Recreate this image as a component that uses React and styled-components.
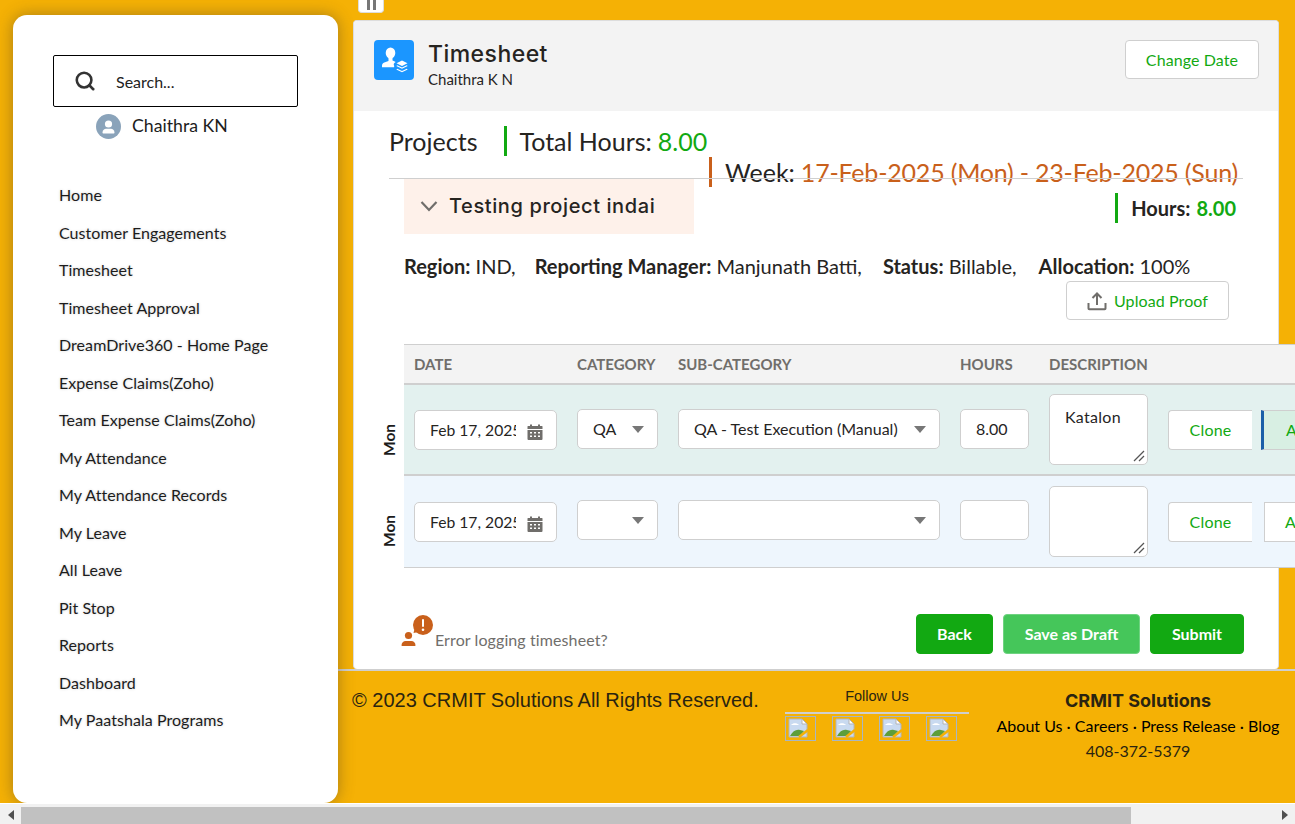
import React from "react"
import styled, { createGlobalStyle } from "styled-components"
import { Search } from "lucide-react"

const GREEN = "#12a912"
const ORANGE = "#c9601b"
const GRAY = "#706e6b"
const LINE = "#cfcfcf"
const INK = "#26241f"

const Global = createGlobalStyle`
  html, body { margin: 0; padding: 0; height: 100%; overflow: hidden; }
  body { font-family: Lato, "Liberation Sans", sans-serif; color: ${INK}; background: #f5b105; }
  * { box-sizing: border-box; }
`

const Page = styled.div`
  height: 824px;
  display: flex;
  flex-direction: column;
`

const Viewport = styled.div`
  height: 803px;
  display: flex;
  overflow: hidden;
  background: #f5b105;
`

const Sidebar = styled.aside`
  flex: 0 0 325px;
  height: 788px;
  margin: 15px 0 0 13px;
  padding: 40px 40px 0;
  background: #fff;
  border-radius: 14px;
  box-shadow: 0 0 16px rgba(70, 60, 40, 0.45);
  position: relative;
  z-index: 1;
`

const SearchBox = styled.div`
  height: 52px;
  width: 245px;
  display: flex;
  align-items: center;
  padding-left: 20px;
  gap: 20px;
  border: 1px solid #000;
  border-radius: 2px;
  font-size: 16px;
  color: #222;
`

const UserRow = styled.div`
  display: flex;
  align-items: center;
  gap: 11px;
  margin: 7px 0 0 43px;
  font-size: 17.7px;
  color: #1c1c1c;
`

const UserName = styled.span`
  margin-bottom: 2px;
`

const Menu = styled.nav`
  margin: 37px 0 0 6px;
  display: flex;
  flex-direction: column;
`

const MenuItem = styled.a`
  height: 37.5px;
  line-height: 37.5px;
  font-size: 16px;
  letter-spacing: 0.06px;
  color: #1c1c1c;
  text-shadow: 0 0 3px rgba(0, 0, 0, 0.18);
`

const Content = styled.div`
  flex: 1;
  min-width: 0;
  display: flex;
  flex-direction: column;
`

const PauseTab = styled.div`
  width: 26px;
  height: 13px;
  margin-left: 20px;
  display: flex;
  justify-content: center;
  gap: 3px;
  background: #fff;
  border: 1px solid #ddd;
  border-top: 0;
  border-radius: 0 0 4px 4px;
`

const PauseBar = styled.span`
  width: 3px;
  height: 10px;
  background: #777;
`

const Card = styled.main`
  width: 926px;
  height: 649px;
  margin: 7px 0 0 15px;
  background: #fff;
  border: 1px solid #ddd;
  border-bottom: 0;
  border-radius: 4px;
`

const CardHeader = styled.header`
  height: 90px;
  display: flex;
  align-items: flex-start;
  padding: 19px 19px 0 20px;
  background: #f3f3f3;
  border-radius: 4px 4px 0 0;
`

const AppIcon = styled.div`
  width: 40px;
  height: 40px;
  border-radius: 4px;
  background: #1b96ff;
  display: flex;
  align-items: center;
  justify-content: center;
`

const Titles = styled.div`
  margin-left: 14px;
  flex: 1;
`

const Title = styled.div`
  font-family: Inter, "Noto Sans", sans-serif;
  font-size: 23px;
  font-weight: 500;
  line-height: 28px;
  letter-spacing: 0.45px;
`

const SubTitle = styled.div`
  margin-top: 2px;
  font-size: 15px;
  line-height: 18px;
`

const OutlineButton = styled.button`
  height: 39px;
  width: ${(p) => p.$w}px;
  display: flex;
  align-items: center;
  justify-content: center;
  gap: 7px;
  font: 400 16px Lato, sans-serif;
  letter-spacing: 0.1px;
  color: ${GREEN};
  background: #fff;
  border: 1px solid ${LINE};
  border-radius: 4px;
  padding: 0;
`

const Body = styled.div`
  padding-left: 35px;
`

const SummaryRow = styled.div`
  display: flex;
  align-items: center;
  height: 30px;
  margin-top: 15px;
  font-size: 25px;
`

const BarText = styled.div`
  display: flex;
  align-items: center;
  height: 30px;
  padding-left: ${(p) => p.$pad || 13}px;
  border-left: 3px solid ${(p) => p.$color};
  margin-left: ${(p) => p.$ml || 0}px;
  white-space: nowrap;
`

const Value = styled.span`
  color: ${(p) => p.$color};
  margin-left: 6px;
  letter-spacing: ${(p) => p.$track || 0}px;
`

const WeekRow = styled.div`
  display: flex;
  margin: 1px 0 0 320px;
  font-size: 25px;
`

const Divider = styled.div`
  position: relative;
  width: 854px;
  height: 1px;
  margin-top: -9px;
  background: ${LINE};
`

const AccordionRow = styled.div`
  display: flex;
  justify-content: space-between;
  width: 832px;
  margin-left: 15px;
`

const Accordion = styled.div`
  width: 290px;
  height: 55px;
  padding: 0 0 2px 16px;
  display: flex;
  align-items: center;
  gap: 11px;
  background: #fef1ea;
  font-family: Inter, "Noto Sans", sans-serif;
  font-size: 20px;
  font-weight: 500;
  letter-spacing: 0.6px;
`

const HoursBox = styled.div`
  margin-top: 14px;
  font-size: 20px;
  font-weight: 700;
`

const MetaLine = styled.div`
  display: flex;
  height: 30px;
  line-height: 30px;
  margin: 17px 0 0 15px;
  font-size: 20px;
  white-space: nowrap;
  b { font-weight: 700; }
`

const MetaItem = styled.span`
  margin-left: ${(p) => p.$ml || 0}px;
`

const UploadRow = styled.div`
  display: flex;
  justify-content: flex-end;
  width: 840px;
`

const Table = styled.div`
  margin: 24px 0 0 -9px;
  width: 1020px;
`

const HeadRow = styled.div`
  display: flex;
  gap: 20px;
  height: 41px;
  margin-left: 24px;
  padding-left: 10px;
  align-items: center;
  background: #f3f3f3;
  border-top: 1px solid ${LINE};
  border-bottom: 2px solid ${LINE};
  font-size: 15px;
  font-weight: 700;
  color: ${GRAY};
`

const HeadCell = styled.div`
  width: ${(p) => p.$w}px;
  white-space: nowrap;
`

const Row = styled.div`
  display: flex;
  height: ${(p) => p.$h}px;
`

const DayCell = styled.div`
  flex: 0 0 24px;
  min-width: 0;
  padding: 18px 6px 0 0;
  display: flex;
  align-items: center;
  justify-content: center;
`

const DayLabel = styled.span`
  transform: rotate(-90deg);
  font-size: 15.5px;
  font-weight: 700;
  color: #1c1c1c;
`

const Band = styled.div`
  flex: 1;
  display: flex;
  align-items: center;
  gap: 20px;
  padding-left: 10px;
  background: ${(p) => p.$bg};
  border-bottom: ${(p) => p.$edge}px solid ${LINE};
`

const Field = styled.div`
  position: relative;
  flex: 0 0 ${(p) => p.$w}px;
  height: ${(p) => p.$h || 40}px;
  display: flex;
  align-items: ${(p) => (p.$top ? "flex-start" : "center")};
  margin-top: ${(p) => p.$mt || 0}px;
  padding: ${(p) => (p.$top ? "12px 0 0 15px" : "0 0 2px 15px")};
  background: #fff;
  border: 1px solid ${LINE};
  border-radius: 5px;
  font-size: 16px;
  letter-spacing: ${(p) => (p.$top ? 0.3 : 0)}px;
  white-space: nowrap;
`

const DateClip = styled.span`
  width: 86px;
  margin-top: 2px;
  overflow: hidden;
  font-size: 15.7px;
`

const Caret = styled.span`
  position: absolute;
  right: 13px;
  top: 16px;
  width: 0;
  height: 0;
  border-left: 6.5px solid transparent;
  border-right: 6.5px solid transparent;
  border-top: 7px solid #777;
`

const TrailingIcon = styled.span`
  position: absolute;
  right: 13px;
  top: 13px;
  display: flex;
`

const Grip = styled.span`
  position: absolute;
  right: 2px;
  bottom: 2px;
  display: flex;
`

const CloneButton = styled.div`
  flex: 0 0 84px;
  height: 40px;
  margin-top: 1px;
  margin-right: ${(p) => p.$mr}px;
  padding-bottom: 2px;
  display: flex;
  align-items: center;
  justify-content: center;
  background: #fff;
  border: 1px solid ${LINE};
  border-right: 0;
  border-radius: 4px 0 0 4px;
  font-size: 16px;
  letter-spacing: 0.2px;
  color: ${GREEN};
`

const AddButton = styled.div`
  flex: 0 0 100px;
  height: 40px;
  margin-top: 1px;
  padding: 0 0 2px ${(p) => (p.$active ? 22 : 20)}px;
  display: flex;
  align-items: center;
  background: ${(p) => (p.$active ? "#d8efe3" : "#fff")};
  border: 1px solid ${LINE};
  border-left: ${(p) => (p.$active ? "3px solid #1a5fa8" : `1px solid ${LINE}`)};
  font-size: 16px;
  color: ${GREEN};
`

const ActionRow = styled.div`
  display: flex;
  align-items: center;
  gap: 10px;
  width: 855px;
  margin-top: 46px;
  padding-left: 12px;
`

const ErrorLink = styled.div`
  flex: 1;
  display: flex;
  align-items: flex-end;
  gap: 1px;
  font-size: 16px;
  letter-spacing: 0.1px;
  color: ${GRAY};
`

const ErrorSlot = styled.span`
  display: flex;
  margin-bottom: 6px;
`

const ErrorText = styled.span`
  line-height: 18px;
  margin-bottom: 4px;
`

const ActionButton = styled.button`
  height: 40px;
  width: ${(p) => p.$w}px;
  padding: 0 0 2px;
  background: ${(p) => (p.$light ? "#45c65a" : GREEN)};
  border: 1px solid ${(p) => (p.$light ? "#6fd381" : GREEN)};
  border-radius: 4px;
  color: #fff;
  font: 700 16px Lato, sans-serif;
`

const Footer = styled.footer`
  flex: 1;
  display: flex;
  border-top: 2px solid ${LINE};
  padding-left: 14px;
  color: #2a2410;
`

const Copyright = styled.div`
  flex: 0 0 433px;
  padding-top: 17px;
  font-family: "Liberation Sans", Arial, sans-serif;
  font-size: 20px;
  line-height: 24px;
`

const Follow = styled.div`
  flex: 0 0 184px;
`

const FollowTitle = styled.div`
  height: 43px;
  padding-top: 16px;
  line-height: 18px;
  text-align: center;
  font-family: "Liberation Sans", Arial, sans-serif;
  font-size: 14.5px;
  border-bottom: 2px solid ${LINE};
`

const Socials = styled.div`
  display: flex;
  gap: 16px;
  margin-top: 2px;
`

const SocialBox = styled.div`
  width: 31px;
  height: 25px;
  padding: 1px 2px;
  border: 1px solid #a8b6c4;
`

const Company = styled.div`
  flex: 0 0 300px;
  margin-left: 19px;
  text-align: center;
`

const CompanyName = styled.div`
  margin-top: 18px;
  font-family: Inter, "Noto Sans", sans-serif;
  font-size: 18px;
  font-weight: 700;
  line-height: 24px;
`

const CompanyLinks = styled.div`
  font-size: 16px;
  line-height: 26px;
  color: #000;
  white-space: nowrap;
`

const Phone = styled.div`
  font-size: 16px;
  line-height: 24px;
`

const ScrollTrack = styled.div`
  height: 21px;
  display: flex;
  align-items: center;
  padding-top: 2px;
  background: #f1f1f1;
  border-top: 1px solid #fff;
`

const ScrollArrow = styled.span`
  flex: 0 0 21px;
  display: flex;
  justify-content: center;
`

const ScrollThumb = styled.div`
  width: 1110px;
  height: 17px;
  background: #c1c1c1;
`

const ScrollRest = styled.div`
  flex: 1;
`

const menuItems = [
  "Home",
  "Customer Engagements",
  "Timesheet",
  "Timesheet Approval",
  "DreamDrive360 - Home Page",
  "Expense Claims(Zoho)",
  "Team Expense Claims(Zoho)",
  "My Attendance",
  "My Attendance Records",
  "My Leave",
  "All Leave",
  "Pit Stop",
  "Reports",
  "Dashboard",
  "My Paatshala Programs",
]

function Avatar() {
  return (
    <svg width="25" height="25" viewBox="0 0 25 25">
      <circle cx="12.5" cy="12.5" r="12.5" fill="#8aa3ba" />
      <circle cx="12.5" cy="10" r="3.6" fill="#fff" />
      <path d="M6.5 18.5c0-2.6 2-3.8 3.5-3.8h5c1.5 0 3.5 1.2 3.5 3.8 0 .6-.4 1-1 1h-10c-.6 0-1-.4-1-1z" fill="#fff" />
    </svg>
  )
}

function TimesheetIcon() {
  return (
    <svg width="40" height="40" viewBox="0 0 40 40" fill="#fff">
      <ellipse cx="16.5" cy="13" rx="4.800" ry="5.500" />
      <path d="M14.500 18h4v2.500c1.300.5 2.300.9 3.200 1.500-1.600.8-2.400 1.900-1.700 3.500.2.400.3.800.1 1.700H8v-1.700c0-1.500 1.100-2.500 3-3.200l3.500-1.300z" />
      <path d="M28 20.500l5.500 2.800L28 26l-5.500-2.700z" />
      <path d="M23.300 25.300l4.700 2.300 4.700-2.300 1 .6L28 28.800l-5.700-2.900z" />
      <path d="M23.300 28.800l4.700 2.300 4.700-2.300 1 .6L28 32.300l-5.700-2.900z" />
    </svg>
  )
}

function ChevronIcon() {
  return (
    <svg width="18" height="12" viewBox="0 0 18 12" fill="none" stroke="#706e6b" strokeWidth="2.200">
      <path d="M1.500 2L9 10l7.500-8" />
    </svg>
  )
}

function CalendarIcon() {
  return (
    <svg width="16" height="16" viewBox="0 0 16 16" fill="#706e6b">
      <rect x="3" y="0.5" width="2" height="2.5" />
      <rect x="11" y="0.5" width="2" height="2.5" />
      <path d="M1 2h14a.5.5 0 0 1 .5.5V5H.5V2.500A.5.5 0 0 1 1 2z" />
      <path fillRule="evenodd" d="M.5 6h15v9a1 1 0 0 1-1 1h-13a1 1 0 0 1-1-1zM3 8v1.500h2V8zm4 0v1.500h2V8zm4 0v1.500h2V8zM3 11.500V13h2v-1.500zm4 0V13h2v-1.500zm4 0V13h2v-1.500z" />
    </svg>
  )
}

function UploadIcon() {
  return (
    <svg width="20" height="20" viewBox="0 0 20 20" fill="none" stroke="#706e6b" strokeWidth="2">
      <path d="M10 14V2.500" />
      <path d="M5.500 7L10 2.500 14.500 7" />
      <path d="M1.500 12v5.500c0 .5.3.8.8.8h15.400c.5 0 .8-.3.8-.8V12" />
    </svg>
  )
}

function ResizeGrip() {
  return (
    <svg width="12" height="12" viewBox="0 0 12 12" stroke="#555" strokeWidth="1.200">
      <path d="M1 11L11 1" />
      <path d="M6 11L11 6" />
    </svg>
  )
}

function ErrorIcon() {
  return (
    <svg width="33" height="32" viewBox="0 0 33 32" fill={ORANGE}>
      <circle cx="7.500" cy="20.500" r="3.600" />
      <path d="M0.500 30.500c0-3 2-4.500 4-4.500h6c2 0 4 1.500 4 4.500 0 .3-.2.500-.5.500H1c-.3 0-.5-.2-.5-.5z" />
      <circle cx="22" cy="10" r="10" />
      <path d="M12.500 18l1-4 4 3z" />
      <rect x="21" y="4" width="2" height="8" rx="1" fill="#fff" />
      <circle cx="22" cy="14.800" r="1.300" fill="#fff" />
    </svg>
  )
}

function BrokenImage() {
  return (
    <svg width="21" height="20" viewBox="0 0 21 20" style={{ display: "block" }}>
      <path d="M1 1h13l5 5v13H1z" fill="#c9daf0" stroke="#b5b5b5" strokeWidth="1" />
      <path d="M3 7c2-2.500 6-2.500 8 0H3z" fill="#fff" />
      <path d="M14 1v5h5z" fill="#fff" stroke="#b5b5b5" strokeWidth="1" />
      <path d="M2 18c3-5 6-7 10-6l4 1-4 5z" fill="#5d9e3a" />
      <path d="M11 19l9-7" stroke="#f5b105" strokeWidth="2.500" />
    </svg>
  )
}

function ScrollTriangle({ left }) {
  return (
    <svg width="6" height="10" viewBox="0 0 6 10" fill="#505050">
      <path d={left ? "M6 0v10L0 5z" : "M0 0v10l6-5z"} />
    </svg>
  )
}

function EntryRow({ height, edge, bg, filled }) {
  const lift = filled ? -1 : -3
  return (
    <Row $h={height}>
      <DayCell>
        <DayLabel>Mon</DayLabel>
      </DayCell>
      <Band $bg={bg} $edge={edge}>
        <Field $w={143} $mt={1}>
          <DateClip>Feb 17, 2025</DateClip>
          <TrailingIcon>
            <CalendarIcon />
          </TrailingIcon>
        </Field>
        <Field $w={81} $mt={lift}>
          {filled && "QA"}
          <Caret />
        </Field>
        <Field $w={262} $mt={lift}>
          {filled && "QA - Test Execution (Manual)"}
          <Caret />
        </Field>
        <Field $w={69} $mt={lift}>
          {filled && "8.00"}
        </Field>
        <Field $w={99} $h={71} $top>
          {filled && "Katalon"}
          <Grip>
            <ResizeGrip />
          </Grip>
        </Field>
        <CloneButton $mr={filled ? -11 : -8}>Clone</CloneButton>
        <AddButton $active={filled}>Add</AddButton>
      </Band>
    </Row>
  )
}

export default function App() {
  return (
    <Page>
      <Global />
      <Viewport>
        <Sidebar>
          <SearchBox>
            <Search size={22} strokeWidth={2.8} color="#333" />
            <span>Search...</span>
          </SearchBox>
          <UserRow>
            <Avatar />
            <UserName>Chaithra KN</UserName>
          </UserRow>
          <Menu>
            {menuItems.map((item) => (
              <MenuItem key={item}>{item}</MenuItem>
            ))}
          </Menu>
        </Sidebar>
        <Content>
          <PauseTab>
            <PauseBar />
            <PauseBar />
          </PauseTab>
          <Card>
            <CardHeader>
              <AppIcon>
                <TimesheetIcon />
              </AppIcon>
              <Titles>
                <Title>Timesheet</Title>
                <SubTitle>Chaithra K N</SubTitle>
              </Titles>
              <OutlineButton $w={134}>Change Date</OutlineButton>
            </CardHeader>
            <Body>
              <SummaryRow>
                Projects
                <BarText $color={GREEN} $ml={27} $pad={12}>
                  Total Hours:
                  <Value $color={GREEN}>8.00</Value>
                </BarText>
              </SummaryRow>
              <WeekRow>
                <BarText $color={ORANGE}>
                  Week:
                  <Value $color={ORANGE} $track={-0.2}>17-Feb-2025 (Mon) - 23-Feb-2025 (Sun)</Value>
                </BarText>
              </WeekRow>
              <Divider />
              <AccordionRow>
                <Accordion>
                  <ChevronIcon />
                  Testing project indai
                </Accordion>
                <HoursBox>
                  <BarText $color={GREEN}>
                    Hours:
                    <Value $color={GREEN}>8.00</Value>
                  </BarText>
                </HoursBox>
              </AccordionRow>
              <MetaLine>
                <MetaItem><b>Region:</b> IND,</MetaItem>
                <MetaItem $ml={19}><b>Reporting Manager:</b> Manjunath Batti,</MetaItem>
                <MetaItem $ml={21}><b>Status:</b> Billable,</MetaItem>
                <MetaItem $ml={22}><b>Allocation:</b> 100%</MetaItem>
              </MetaLine>
              <UploadRow>
                <OutlineButton $w={163}>
                  <UploadIcon />
                  Upload Proof
                </OutlineButton>
              </UploadRow>
              <Table>
                <HeadRow>
                  <HeadCell $w={143}>DATE</HeadCell>
                  <HeadCell $w={81}>CATEGORY</HeadCell>
                  <HeadCell $w={262}>SUB-CATEGORY</HeadCell>
                  <HeadCell $w={69}>HOURS</HeadCell>
                  <HeadCell $w={99}>DESCRIPTION</HeadCell>
                </HeadRow>
                <EntryRow height={91} edge={2} bg="#e3f1ef" filled />
                <EntryRow height={92} edge={1} bg="#eef6fd" />
              </Table>
              <ActionRow>
                <ErrorLink>
                  <ErrorSlot>
                    <ErrorIcon />
                  </ErrorSlot>
                  <ErrorText>Error logging timesheet?</ErrorText>
                </ErrorLink>
                <ActionButton $w={77}>Back</ActionButton>
                <ActionButton $w={137} $light>Save as Draft</ActionButton>
                <ActionButton $w={94}>Submit</ActionButton>
              </ActionRow>
            </Body>
          </Card>
          <Footer>
            <Copyright>© 2023 CRMIT Solutions All Rights Reserved.</Copyright>
            <Follow>
              <FollowTitle>Follow Us</FollowTitle>
              <Socials>
                {[0, 1, 2, 3].map((n) => (
                  <SocialBox key={n}>
                    <BrokenImage />
                  </SocialBox>
                ))}
              </Socials>
            </Follow>
            <Company>
              <CompanyName>CRMIT Solutions</CompanyName>
              <CompanyLinks>About Us · Careers · Press Release · Blog</CompanyLinks>
              <Phone>408-372-5379</Phone>
            </Company>
          </Footer>
        </Content>
      </Viewport>
      <ScrollTrack>
        <ScrollArrow>
          <ScrollTriangle left />
        </ScrollArrow>
        <ScrollThumb />
        <ScrollRest />
        <ScrollArrow>
          <ScrollTriangle />
        </ScrollArrow>
      </ScrollTrack>
    </Page>
  )
}
